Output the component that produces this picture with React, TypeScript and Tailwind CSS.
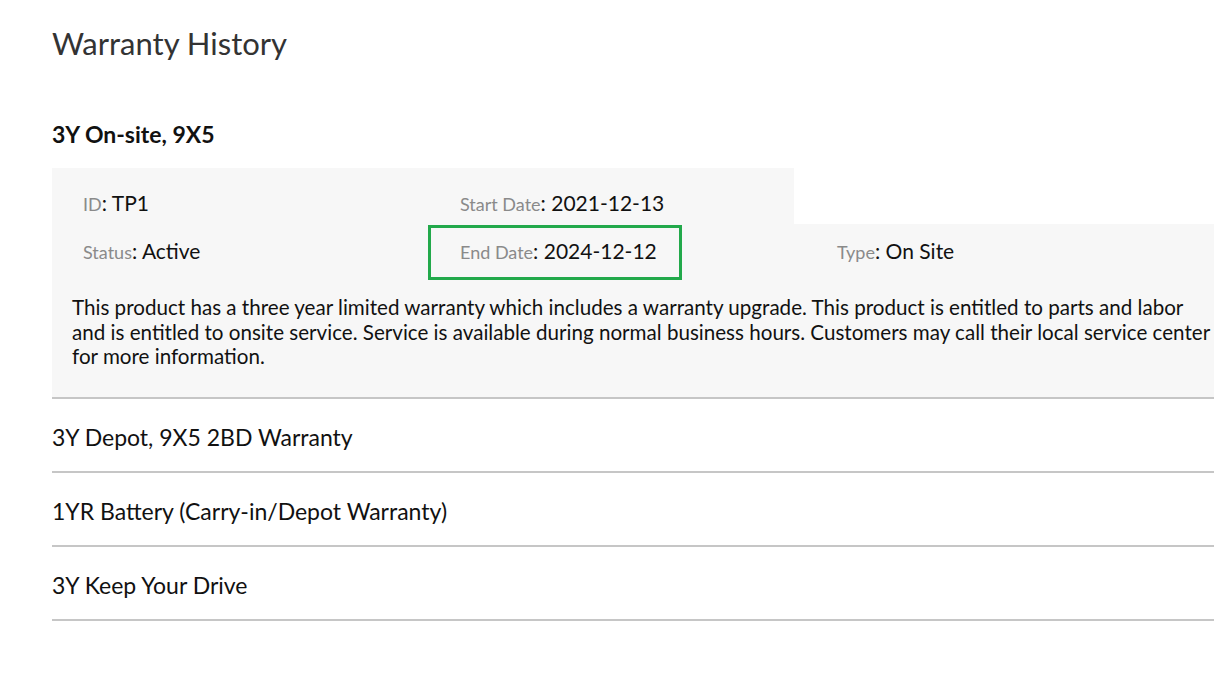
import React from 'react'

interface Warranty {
  id: string
  name: string
}

const others: Warranty[] = [
  { id: 'TP2', name: '3Y Depot, 9X5 2BD Warranty' },
  { id: 'TP3', name: '1YR Battery (Carry-in/Depot Warranty)' },
  { id: 'TP4', name: '3Y Keep Your Drive' },
]

function Field({ label, value }: { label: string; value: string }) {
  return (
    <span className="whitespace-nowrap leading-6">
      <span className="text-[18px] text-[#8a8a8a]">{label}</span>
      <span className="text-[21px] text-[#111]">: {value}</span>
    </span>
  )
}

export default function App() {
  return (
    <div
      className="min-h-screen overflow-hidden bg-white pl-[52px]"
      style={{ fontFamily: 'Lato, "Open Sans", sans-serif' }}
    >
      <div className="w-[1182px]">
        {/* Title */}
        <h1 className="pt-[24px] text-[31px] leading-[38px] text-[#333]">Warranty History</h1>

        <h2 className="mt-[58px] text-[23px] font-bold leading-[28px] text-[#111]">3Y On-site, 9X5</h2>

        {/* Expanded warranty */}
        <div className="mt-[20px] border-b-2 border-[#c6c6c6]">
          <div className="flex h-[56px] w-[742px] items-end bg-[#f7f7f7] pb-[7px]">
            <div className="w-[376px] pl-[31px]">
              <Field label="ID" value="TP1" />
            </div>
            <div className="w-[366px] pl-[32px]">
              <Field label="Start Date" value="2021-12-13" />
            </div>
          </div>
          <div className="bg-[#f7f7f7] pb-[28px]">
            <div className="flex h-[56px] items-center">
              <div className="w-[376px] pl-[31px]">
                <Field label="Status" value="Active" />
              </div>
              <div className="flex h-full w-[376px] items-center">
                <div className="flex h-[55px] items-center border-[3px] border-[#22a94b] pl-[29px] pr-[22px]">
                  <Field label="End Date" value="2024-12-12" />
                </div>
              </div>
              <div className="pl-[33px]">
                <Field label="Type" value="On Site" />
              </div>
            </div>
            <p className="mt-[15px] w-[1168px] pl-5 text-[20.6px] leading-[24.5px] text-[#111]">
              This product has a three year limited warranty which includes a warranty upgrade. This product is
              entitled to parts and labor and is entitled to onsite service. Service is available during normal
              business hours. Customers may call their local service center for more information.
            </p>
          </div>
        </div>

        {/* Collapsed warranties */}
        {others.map((w) => (
          <div key={w.id} className="border-b-2 border-[#c6c6c6] pb-[20px] pt-[24px]">
            <div className="text-[23px] leading-[28px] text-[#111]">{w.name}</div>
          </div>
        ))}
      </div>
    </div>
  )
}
